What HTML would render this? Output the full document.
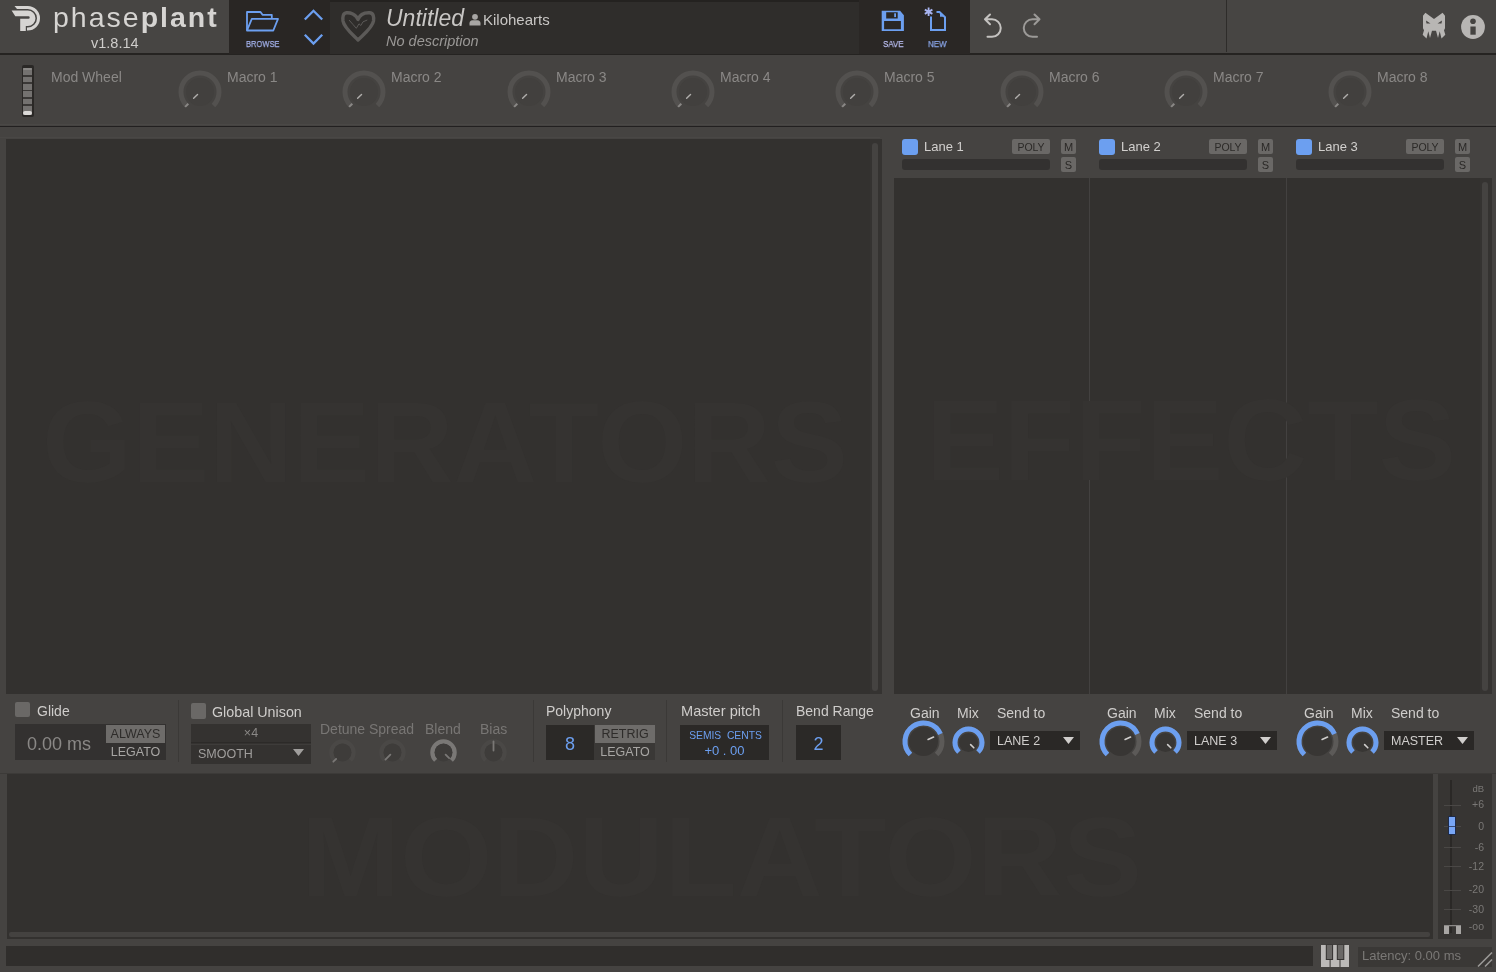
<!DOCTYPE html><html><head><meta charset="utf-8"><style>
html,body{margin:0;padding:0;background:#454341;width:1496px;height:972px;overflow:hidden;position:relative;font-family:"Liberation Sans", sans-serif;}
body>div,body>svg{position:absolute;}
.t{white-space:nowrap;line-height:1.15;will-change:transform;}
</style></head><body>
<div style="left:0px;top:0px;width:1496px;height:54px;background:#474543;"></div><div style="left:0px;top:53.2px;width:1496px;height:1.6px;background:#252321;"></div><div class="t" style="left:53px;top:0.5px;font-size:28.5px;color:#d6d4d2;letter-spacing:2px;">phase<b>plant</b></div><div class="t" style="left:91px;top:35px;font-size:14.5px;color:#cfcdcb;">v1.8.14</div><div style="left:229px;top:0px;width:101px;height:53.5px;background:#292624;"></div><div style="left:330px;top:0px;width:529px;height:53.5px;background:#2f2d2b;"></div><div style="left:330px;top:0px;width:529px;height:2px;background:#242220;"></div><div style="left:859px;top:0px;width:111px;height:53.5px;background:#2a2725;"></div><div class="t" style="left:246px;top:38px;font-size:9.8px;color:#a4b2ec;-webkit-text-stroke:0.25px #a4b2ec;transform:scaleX(0.77);transform-origin:0 0;">BROWSE</div><div class="t" style="left:882.5px;top:38px;font-size:9.8px;color:#b8bcee;-webkit-text-stroke:0.25px #b8bcee;transform:scaleX(0.81);transform-origin:0 0;">SAVE</div><div class="t" style="left:928px;top:38px;font-size:9.8px;color:#8aa6e8;-webkit-text-stroke:0.25px #8aa6e8;transform:scaleX(0.82);transform-origin:0 0;">NEW</div><div class="t" style="left:386px;top:5px;font-size:23px;color:#c8c6c4;font-style:italic;">Untitled</div><div class="t" style="left:483px;top:11.2px;font-size:15px;color:#c8c6c4;">Kilohearts</div><div class="t" style="left:386px;top:33px;font-size:14.5px;color:#9a9896;font-style:italic;">No description</div><div style="left:1226px;top:0px;width:1px;height:52px;background:#2e2c2a;"></div><div style="left:0px;top:54.8px;width:1496px;height:69px;background:#454341;"></div><div style="left:0px;top:123.8px;width:1496px;height:1px;background:#4a4846;"></div><div style="left:0px;top:125.9px;width:1496px;height:1.5px;background:#222020;"></div><div style="left:0px;top:136.5px;width:880px;height:1px;background:#494745;"></div><div style="left:22px;top:65px;width:11.5px;height:51.5px;background:#2a2826;border-radius:2px;"></div><div style="left:23.2px;top:68px;width:9.2px;height:47px;background:#747270;border-radius:1px;"></div><div style="left:23.2px;top:75px;width:9.2px;height:1.6px;background:#3a3836;"></div><div style="left:23.2px;top:82.3px;width:9.2px;height:1.6px;background:#3a3836;"></div><div style="left:23.2px;top:89.8px;width:9.2px;height:1.6px;background:#3a3836;"></div><div style="left:23.2px;top:97px;width:9.2px;height:1.6px;background:#3a3836;"></div><div style="left:23.2px;top:104.3px;width:9.2px;height:1.6px;background:#3a3836;"></div><div style="left:23.2px;top:68px;width:9.2px;height:2px;background:#8a8886;border-radius:1px;"></div><div style="left:23.2px;top:110.8px;width:9.2px;height:4.2px;background:#dcdad8;border-radius:2px;"></div><div class="t" style="left:51px;top:69px;font-size:14px;color:#8a8886;">Mod Wheel</div><svg style="position:absolute;left:174.0px;top:65.5px" width="52" height="52"><path d="M12.56 39.44A19 19 0 1 1 39.44 39.43" stroke="#53514f" stroke-width="5" fill="none"/><circle cx="26.0" cy="26.0" r="14" fill="#42403e"/><line x1="23.53" y1="28.47" x2="19.64" y2="32.36" stroke="#b0aeac" stroke-width="1.4" stroke-linecap="round"/></svg><svg style="position:absolute;left:175.0px;top:66.5px" width="50" height="50"><line x1="13.33" y1="36.67" x2="10.15" y2="39.85" stroke="#8a8886" stroke-width="2"/></svg><div class="t" style="left:227.0px;top:69px;font-size:14px;color:#8a8886;">Macro 1</div><svg style="position:absolute;left:338.3px;top:65.5px" width="52" height="52"><path d="M12.56 39.44A19 19 0 1 1 39.44 39.43" stroke="#53514f" stroke-width="5" fill="none"/><circle cx="26.0" cy="26.0" r="14" fill="#42403e"/><line x1="23.53" y1="28.47" x2="19.64" y2="32.36" stroke="#b0aeac" stroke-width="1.4" stroke-linecap="round"/></svg><svg style="position:absolute;left:339.3px;top:66.5px" width="50" height="50"><line x1="13.33" y1="36.67" x2="10.15" y2="39.85" stroke="#8a8886" stroke-width="2"/></svg><div class="t" style="left:391.3px;top:69px;font-size:14px;color:#8a8886;">Macro 2</div><svg style="position:absolute;left:502.6px;top:65.5px" width="52" height="52"><path d="M12.56 39.44A19 19 0 1 1 39.44 39.43" stroke="#53514f" stroke-width="5" fill="none"/><circle cx="26.0" cy="26.0" r="14" fill="#42403e"/><line x1="23.53" y1="28.47" x2="19.64" y2="32.36" stroke="#b0aeac" stroke-width="1.4" stroke-linecap="round"/></svg><svg style="position:absolute;left:503.6px;top:66.5px" width="50" height="50"><line x1="13.33" y1="36.67" x2="10.15" y2="39.85" stroke="#8a8886" stroke-width="2"/></svg><div class="t" style="left:555.6px;top:69px;font-size:14px;color:#8a8886;">Macro 3</div><svg style="position:absolute;left:666.9000000000001px;top:65.5px" width="52" height="52"><path d="M12.56 39.44A19 19 0 1 1 39.44 39.43" stroke="#53514f" stroke-width="5" fill="none"/><circle cx="26.0" cy="26.0" r="14" fill="#42403e"/><line x1="23.53" y1="28.47" x2="19.64" y2="32.36" stroke="#b0aeac" stroke-width="1.4" stroke-linecap="round"/></svg><svg style="position:absolute;left:667.9000000000001px;top:66.5px" width="50" height="50"><line x1="13.33" y1="36.67" x2="10.15" y2="39.85" stroke="#8a8886" stroke-width="2"/></svg><div class="t" style="left:719.9000000000001px;top:69px;font-size:14px;color:#8a8886;">Macro 4</div><svg style="position:absolute;left:831.2px;top:65.5px" width="52" height="52"><path d="M12.56 39.44A19 19 0 1 1 39.44 39.43" stroke="#53514f" stroke-width="5" fill="none"/><circle cx="26.0" cy="26.0" r="14" fill="#42403e"/><line x1="23.53" y1="28.47" x2="19.64" y2="32.36" stroke="#b0aeac" stroke-width="1.4" stroke-linecap="round"/></svg><svg style="position:absolute;left:832.2px;top:66.5px" width="50" height="50"><line x1="13.33" y1="36.67" x2="10.15" y2="39.85" stroke="#8a8886" stroke-width="2"/></svg><div class="t" style="left:884.2px;top:69px;font-size:14px;color:#8a8886;">Macro 5</div><svg style="position:absolute;left:995.5px;top:65.5px" width="52" height="52"><path d="M12.56 39.44A19 19 0 1 1 39.44 39.43" stroke="#53514f" stroke-width="5" fill="none"/><circle cx="26.0" cy="26.0" r="14" fill="#42403e"/><line x1="23.53" y1="28.47" x2="19.64" y2="32.36" stroke="#b0aeac" stroke-width="1.4" stroke-linecap="round"/></svg><svg style="position:absolute;left:996.5px;top:66.5px" width="50" height="50"><line x1="13.33" y1="36.67" x2="10.15" y2="39.85" stroke="#8a8886" stroke-width="2"/></svg><div class="t" style="left:1048.5px;top:69px;font-size:14px;color:#8a8886;">Macro 6</div><svg style="position:absolute;left:1159.8000000000002px;top:65.5px" width="52" height="52"><path d="M12.56 39.44A19 19 0 1 1 39.44 39.43" stroke="#53514f" stroke-width="5" fill="none"/><circle cx="26.0" cy="26.0" r="14" fill="#42403e"/><line x1="23.53" y1="28.47" x2="19.64" y2="32.36" stroke="#b0aeac" stroke-width="1.4" stroke-linecap="round"/></svg><svg style="position:absolute;left:1160.8000000000002px;top:66.5px" width="50" height="50"><line x1="13.33" y1="36.67" x2="10.15" y2="39.85" stroke="#8a8886" stroke-width="2"/></svg><div class="t" style="left:1212.8000000000002px;top:69px;font-size:14px;color:#8a8886;">Macro 7</div><svg style="position:absolute;left:1324.1000000000001px;top:65.5px" width="52" height="52"><path d="M12.56 39.44A19 19 0 1 1 39.44 39.43" stroke="#53514f" stroke-width="5" fill="none"/><circle cx="26.0" cy="26.0" r="14" fill="#42403e"/><line x1="23.53" y1="28.47" x2="19.64" y2="32.36" stroke="#b0aeac" stroke-width="1.4" stroke-linecap="round"/></svg><svg style="position:absolute;left:1325.1000000000001px;top:66.5px" width="50" height="50"><line x1="13.33" y1="36.67" x2="10.15" y2="39.85" stroke="#8a8886" stroke-width="2"/></svg><div class="t" style="left:1377.1000000000001px;top:69px;font-size:14px;color:#8a8886;">Macro 8</div><div style="left:6px;top:139px;width:876px;height:555px;background:#33312f;"></div><div style="left:870px;top:139px;width:12px;height:555px;background:#353331;"></div><div style="left:872.3px;top:142.5px;width:5.8px;height:548px;background:#454341;border-radius:3px;"></div><svg style="position:absolute;left:0;top:0" width="1496" height="972"><text x="42" y="482" textLength="806" lengthAdjust="spacingAndGlyphs" font-family="Liberation Sans" font-weight="bold" font-size="115" fill="#353331">GENERATORS</text></svg><div style="left:902px;top:139px;width:16px;height:16px;background:#6c9ff0;border-radius:3px;"></div><div class="t" style="left:924px;top:140px;font-size:13px;color:#d2d0ce;">Lane 1</div><div style="left:1012px;top:139px;width:38px;height:15px;background:#6a6866;border-radius:2px;"></div><div class="t" style="left:1012px;top:140.5px;font-size:10.5px;color:#2c2a28;width:38px;text-align:center;">POLY</div><div style="left:902px;top:159px;width:148px;height:11px;background:#333130;border-radius:3px;"></div><div style="left:1061px;top:139px;width:15px;height:15px;background:#6a6866;border-radius:2px;"></div><div class="t" style="left:1061px;top:140.5px;font-size:11px;color:#2a2826;width:15px;text-align:center;">M</div><div style="left:1061px;top:157px;width:15px;height:15px;background:#6a6866;border-radius:2px;"></div><div class="t" style="left:1061px;top:158.5px;font-size:11px;color:#2a2826;width:15px;text-align:center;">S</div><div style="left:1099px;top:139px;width:16px;height:16px;background:#6c9ff0;border-radius:3px;"></div><div class="t" style="left:1121px;top:140px;font-size:13px;color:#d2d0ce;">Lane 2</div><div style="left:1209px;top:139px;width:38px;height:15px;background:#6a6866;border-radius:2px;"></div><div class="t" style="left:1209px;top:140.5px;font-size:10.5px;color:#2c2a28;width:38px;text-align:center;">POLY</div><div style="left:1099px;top:159px;width:148px;height:11px;background:#333130;border-radius:3px;"></div><div style="left:1258px;top:139px;width:15px;height:15px;background:#6a6866;border-radius:2px;"></div><div class="t" style="left:1258px;top:140.5px;font-size:11px;color:#2a2826;width:15px;text-align:center;">M</div><div style="left:1258px;top:157px;width:15px;height:15px;background:#6a6866;border-radius:2px;"></div><div class="t" style="left:1258px;top:158.5px;font-size:11px;color:#2a2826;width:15px;text-align:center;">S</div><div style="left:1296px;top:139px;width:16px;height:16px;background:#6c9ff0;border-radius:3px;"></div><div class="t" style="left:1318px;top:140px;font-size:13px;color:#d2d0ce;">Lane 3</div><div style="left:1406px;top:139px;width:38px;height:15px;background:#6a6866;border-radius:2px;"></div><div class="t" style="left:1406px;top:140.5px;font-size:10.5px;color:#2c2a28;width:38px;text-align:center;">POLY</div><div style="left:1296px;top:159px;width:148px;height:11px;background:#333130;border-radius:3px;"></div><div style="left:1455px;top:139px;width:15px;height:15px;background:#6a6866;border-radius:2px;"></div><div class="t" style="left:1455px;top:140.5px;font-size:11px;color:#2a2826;width:15px;text-align:center;">M</div><div style="left:1455px;top:157px;width:15px;height:15px;background:#6a6866;border-radius:2px;"></div><div class="t" style="left:1455px;top:158.5px;font-size:11px;color:#2a2826;width:15px;text-align:center;">S</div><div style="left:894px;top:178px;width:598px;height:516px;background:#33312f;"></div><div style="left:1088.5px;top:178px;width:1.5px;height:516px;background:#434140;"></div><div style="left:1285.5px;top:178px;width:1.5px;height:516px;background:#434140;"></div><div style="left:1480px;top:178px;width:12px;height:516px;background:#353331;"></div><div style="left:1482px;top:181.5px;width:6px;height:509px;background:#454341;border-radius:3px;"></div><svg style="position:absolute;left:0;top:0" width="1496" height="972"><text x="926" y="480" textLength="530" lengthAdjust="spacingAndGlyphs" font-family="Liberation Sans" font-weight="bold" font-size="115" fill="#353331">EFFECTS</text></svg><div style="left:15px;top:702px;width:15px;height:15px;background:#6a6866;border-radius:2px;"></div><div class="t" style="left:37px;top:703px;font-size:14px;color:#cfcdcb;">Glide</div><div style="left:15px;top:724px;width:151px;height:36px;background:#333130;"></div><div class="t" style="left:27px;top:734px;font-size:18px;color:#8a8886;">0.00 ms</div><div style="left:106px;top:725px;width:59px;height:18px;background:#6e6c6a;"></div><div class="t" style="left:106px;top:727px;font-size:12.5px;color:#2e2c2a;width:59px;text-align:center;">ALWAYS</div><div class="t" style="left:106px;top:745px;font-size:12.5px;color:#a8a6a4;width:59px;text-align:center;">LEGATO</div><div style="left:178px;top:700px;width:1px;height:62px;background:#3b3937;"></div><div style="left:191px;top:703px;width:15px;height:16px;background:#6a6866;border-radius:2px;"></div><div class="t" style="left:212px;top:703.5px;font-size:14.3px;color:#cfcdcb;">Global Unison</div><div style="left:191px;top:724px;width:120px;height:40px;background:#343230;"></div><div style="left:191px;top:742px;width:120px;height:1px;background:#2c2a28;"></div><div style="left:191px;top:743.5px;width:120px;height:1px;background:#3e3c3a;"></div><div class="t" style="left:191px;top:726px;font-size:12.5px;color:#8a8886;width:120px;text-align:center;">×4</div><div class="t" style="left:198px;top:746.5px;font-size:12.5px;color:#a09e9c;">SMOOTH</div><svg style="position:absolute;left:293px;top:749px" width="11" height="8"><path d="M0 0H11L5.5 7Z" fill="#a09e9c"/></svg><div class="t" style="left:320px;top:721px;font-size:14px;color:#787674;">Detune</div><div class="t" style="left:369px;top:721px;font-size:14px;color:#787674;">Spread</div><div class="t" style="left:425px;top:721px;font-size:14px;color:#787674;">Blend</div><div class="t" style="left:480px;top:721px;font-size:14px;color:#787674;">Bias</div><svg style="position:absolute;left:324.5px;top:734.5px" width="35.0" height="35.0"><path d="M9.72 25.28A11 11 0 1 1 25.28 25.28" stroke="#4a4846" stroke-width="4.5" fill="none"/><circle cx="17.5" cy="17.5" r="9" fill="#3e3c3a"/><line x1="11.14" y1="23.86" x2="8.31" y2="26.69" stroke="#7a7876" stroke-width="1.8" stroke-linecap="round"/></svg><svg style="position:absolute;left:374.5px;top:734.5px" width="35.0" height="35.0"><path d="M9.72 25.28A11 11 0 1 1 25.28 25.28" stroke="#4a4846" stroke-width="4.5" fill="none"/><circle cx="17.5" cy="17.5" r="9" fill="#3e3c3a"/><line x1="15.38" y1="19.62" x2="10.43" y2="24.57" stroke="#7a7876" stroke-width="1.8" stroke-linecap="round"/></svg><svg style="position:absolute;left:425.5px;top:734.5px" width="35.0" height="35.0"><path d="M9.72 25.28A11 11 0 1 1 25.28 25.28" stroke="#7a7876" stroke-width="4.5" fill="none"/><circle cx="17.5" cy="17.5" r="9" fill="#3e3c3a"/><line x1="19.62" y1="19.62" x2="23.16" y2="23.16" stroke="#7a7876" stroke-width="1.8" stroke-linecap="round"/></svg><svg style="position:absolute;left:475.5px;top:734.5px" width="35.0" height="35.0"><path d="M9.72 25.28A11 11 0 1 1 25.28 25.28" stroke="#4a4846" stroke-width="4.5" fill="none"/><circle cx="17.5" cy="17.5" r="9" fill="#3e3c3a"/><line x1="17.50" y1="15.50" x2="17.50" y2="6.50" stroke="#7a7876" stroke-width="1.8" stroke-linecap="round"/></svg><div style="left:533px;top:700px;width:1px;height:62px;background:#3b3937;"></div><div class="t" style="left:546px;top:703px;font-size:14px;color:#cfcdcb;">Polyphony</div><div style="left:546px;top:725px;width:109px;height:35px;background:#2b2927;"></div><div style="left:594px;top:725px;width:61px;height:35px;background:#3a3836;"></div><div class="t" style="left:546px;top:734px;font-size:18px;color:#6c9ff0;width:48px;text-align:center;">8</div><div style="left:595px;top:725px;width:60px;height:18px;background:#6e6c6a;"></div><div class="t" style="left:595px;top:727px;font-size:12.5px;color:#2e2c2a;width:60px;text-align:center;">RETRIG</div><div class="t" style="left:595px;top:745px;font-size:12.5px;color:#a8a6a4;width:60px;text-align:center;">LEGATO</div><div style="left:666px;top:700px;width:1px;height:62px;background:#3b3937;"></div><div class="t" style="left:681px;top:703px;font-size:14.6px;color:#cfcdcb;">Master pitch</div><div style="left:680px;top:725px;width:89px;height:35px;background:#2b2927;"></div><div class="t" style="left:681px;top:730px;font-size:10.3px;color:#6c9ff0;width:89px;text-align:center;">SEMIS&nbsp;&nbsp;CENTS</div><div class="t" style="left:680px;top:744px;font-size:13px;color:#6c9ff0;width:89px;text-align:center;">+0 . 00</div><div style="left:782px;top:700px;width:1px;height:62px;background:#3b3937;"></div><div class="t" style="left:796px;top:703px;font-size:14px;color:#cfcdcb;">Bend Range</div><div style="left:796px;top:725px;width:45px;height:35px;background:#2b2927;"></div><div class="t" style="left:796px;top:734px;font-size:18px;color:#6c9ff0;width:45px;text-align:center;">2</div><div class="t" style="left:910px;top:704.5px;font-size:14px;color:#cfcdcb;">Gain</div><div class="t" style="left:957px;top:704.5px;font-size:14px;color:#cfcdcb;">Mix</div><div class="t" style="left:997px;top:704.5px;font-size:14px;color:#cfcdcb;">Send to</div><svg style="position:absolute;left:897.5px;top:715.5px" width="51.0" height="51.0"><path d="M12.42 38.58A18.5 18.5 0 1 1 38.58 38.58" stroke="#5c5a58" stroke-width="5" fill="none"/><path d="M12.42 38.58A18.5 18.5 0 1 1 42.40 17.98" stroke="#6c9ff0" stroke-width="5" fill="none"/><circle cx="25.5" cy="25.5" r="14.5" fill="#383634"/><line x1="30.07" y1="23.47" x2="35.55" y2="21.03" stroke="#d0cecc" stroke-width="1.6" stroke-linecap="round"/></svg><svg style="position:absolute;left:947.5px;top:721.5px" width="41.0" height="41.0"><path d="M10.95 30.05A13.5 13.5 0 1 1 30.05 30.04" stroke="#5c5a58" stroke-width="5" fill="none"/><path d="M10.95 30.05A13.5 13.5 0 1 1 30.06 30.03" stroke="#6c9ff0" stroke-width="5" fill="none"/><circle cx="20.5" cy="20.5" r="9.5" fill="#383634"/><line x1="22.63" y1="22.62" x2="25.81" y2="25.79" stroke="#d0cecc" stroke-width="1.6" stroke-linecap="round"/></svg><div style="left:990px;top:731px;width:90px;height:19px;background:#2a2826;"></div><div class="t" style="left:997px;top:734px;font-size:12.5px;color:#d0cecc;">LANE 2</div><svg style="position:absolute;left:1063px;top:737px" width="11" height="8"><path d="M0 0H11L5.5 7Z" fill="#d0cecc"/></svg><div class="t" style="left:1107px;top:704.5px;font-size:14px;color:#cfcdcb;">Gain</div><div class="t" style="left:1154px;top:704.5px;font-size:14px;color:#cfcdcb;">Mix</div><div class="t" style="left:1194px;top:704.5px;font-size:14px;color:#cfcdcb;">Send to</div><svg style="position:absolute;left:1094.5px;top:715.5px" width="51.0" height="51.0"><path d="M12.42 38.58A18.5 18.5 0 1 1 38.58 38.58" stroke="#5c5a58" stroke-width="5" fill="none"/><path d="M12.42 38.58A18.5 18.5 0 1 1 42.40 17.98" stroke="#6c9ff0" stroke-width="5" fill="none"/><circle cx="25.5" cy="25.5" r="14.5" fill="#383634"/><line x1="30.07" y1="23.47" x2="35.55" y2="21.03" stroke="#d0cecc" stroke-width="1.6" stroke-linecap="round"/></svg><svg style="position:absolute;left:1144.5px;top:721.5px" width="41.0" height="41.0"><path d="M10.95 30.05A13.5 13.5 0 1 1 30.05 30.04" stroke="#5c5a58" stroke-width="5" fill="none"/><path d="M10.95 30.05A13.5 13.5 0 1 1 30.06 30.03" stroke="#6c9ff0" stroke-width="5" fill="none"/><circle cx="20.5" cy="20.5" r="9.5" fill="#383634"/><line x1="22.63" y1="22.62" x2="25.81" y2="25.79" stroke="#d0cecc" stroke-width="1.6" stroke-linecap="round"/></svg><div style="left:1187px;top:731px;width:90px;height:19px;background:#2a2826;"></div><div class="t" style="left:1194px;top:734px;font-size:12.5px;color:#d0cecc;">LANE 3</div><svg style="position:absolute;left:1260px;top:737px" width="11" height="8"><path d="M0 0H11L5.5 7Z" fill="#d0cecc"/></svg><div class="t" style="left:1304px;top:704.5px;font-size:14px;color:#cfcdcb;">Gain</div><div class="t" style="left:1351px;top:704.5px;font-size:14px;color:#cfcdcb;">Mix</div><div class="t" style="left:1391px;top:704.5px;font-size:14px;color:#cfcdcb;">Send to</div><svg style="position:absolute;left:1291.5px;top:715.5px" width="51.0" height="51.0"><path d="M12.42 38.58A18.5 18.5 0 1 1 38.58 38.58" stroke="#5c5a58" stroke-width="5" fill="none"/><path d="M12.42 38.58A18.5 18.5 0 1 1 42.40 17.98" stroke="#6c9ff0" stroke-width="5" fill="none"/><circle cx="25.5" cy="25.5" r="14.5" fill="#383634"/><line x1="30.07" y1="23.47" x2="35.55" y2="21.03" stroke="#d0cecc" stroke-width="1.6" stroke-linecap="round"/></svg><svg style="position:absolute;left:1341.5px;top:721.5px" width="41.0" height="41.0"><path d="M10.95 30.05A13.5 13.5 0 1 1 30.05 30.04" stroke="#5c5a58" stroke-width="5" fill="none"/><path d="M10.95 30.05A13.5 13.5 0 1 1 30.06 30.03" stroke="#6c9ff0" stroke-width="5" fill="none"/><circle cx="20.5" cy="20.5" r="9.5" fill="#383634"/><line x1="22.63" y1="22.62" x2="25.81" y2="25.79" stroke="#d0cecc" stroke-width="1.6" stroke-linecap="round"/></svg><div style="left:1384px;top:731px;width:90px;height:19px;background:#2a2826;"></div><div class="t" style="left:1391px;top:734px;font-size:12.5px;color:#d0cecc;">MASTER</div><svg style="position:absolute;left:1457px;top:737px" width="11" height="8"><path d="M0 0H11L5.5 7Z" fill="#d0cecc"/></svg><div style="left:0px;top:773px;width:1496px;height:1px;background:#3c3a38;"></div><div style="left:7px;top:774px;width:1426px;height:165px;background:#33312f;"></div><div style="left:9px;top:932px;width:1421px;height:5px;background:#444240;border-radius:2px;"></div><svg style="position:absolute;left:0;top:0" width="1496" height="972"><text x="301" y="896" textLength="841" lengthAdjust="spacingAndGlyphs" font-family="Liberation Sans" font-weight="bold" font-size="114" fill="#353331">MODULATORS</text></svg><div style="left:1438px;top:774px;width:54px;height:165px;background:#373533;"></div><div style="left:1450px;top:780px;width:2px;height:153px;background:#2a2826;"></div><div style="left:1444px;top:804.5px;width:17px;height:1px;background:#4a4846;"></div><div class="t" style="left:1459px;top:798.0px;font-size:10.5px;color:#7a7876;width:25px;text-align:right;">+6</div><div style="left:1444px;top:826px;width:17px;height:1px;background:#4a4846;"></div><div class="t" style="left:1459px;top:819.5px;font-size:10.5px;color:#7a7876;width:25px;text-align:right;">0</div><div style="left:1444px;top:847px;width:17px;height:1px;background:#4a4846;"></div><div class="t" style="left:1459px;top:840.5px;font-size:10.5px;color:#7a7876;width:25px;text-align:right;">-6</div><div style="left:1444px;top:866px;width:17px;height:1px;background:#4a4846;"></div><div class="t" style="left:1459px;top:859.5px;font-size:10.5px;color:#7a7876;width:25px;text-align:right;">-12</div><div style="left:1444px;top:889.5px;width:17px;height:1px;background:#4a4846;"></div><div class="t" style="left:1459px;top:883.0px;font-size:10.5px;color:#7a7876;width:25px;text-align:right;">-20</div><div style="left:1444px;top:909px;width:17px;height:1px;background:#4a4846;"></div><div class="t" style="left:1459px;top:902.5px;font-size:10.5px;color:#7a7876;width:25px;text-align:right;">-30</div><div style="left:1444px;top:926px;width:17px;height:1px;background:#4a4846;"></div><div class="t" style="left:1459px;top:919.5px;font-size:10.5px;color:#7a7876;width:25px;text-align:right;">-oo</div><div class="t" style="left:1460px;top:783.5px;font-size:9.5px;color:#7a7876;width:24px;text-align:right;">dB</div><div style="left:1447.5px;top:816px;width:8px;height:19px;background:#1e2a48;border-radius:1px;"></div><div style="left:1448.5px;top:817px;width:6px;height:17px;background:#78a6f6;"></div><div style="left:1448.5px;top:825.5px;width:6px;height:1px;background:#3a4a70;"></div><div style="left:1444px;top:925px;width:5px;height:9px;background:#a8a6a4;"></div><div style="left:1456px;top:925px;width:5px;height:9px;background:#a8a6a4;"></div><div style="left:1444px;top:925px;width:17px;height:1px;background:#8a8886;"></div><div style="left:6px;top:946px;width:1307px;height:20px;background:#302e2c;"></div><div style="left:1358px;top:947px;width:134px;height:20px;background:#3a3836;"></div><div class="t" style="left:1362px;top:949px;font-size:13px;color:#7a7876;">Latency: 0.00 ms</div><svg style="position:absolute;left:0;top:0" width="1496" height="972"><path d="M14.5 6H27.75A12.25 12.25 0 0 1 27.75 30.5H27V27.5H27.75A9.25 9.25 0 0 0 27.75 9H17Z" fill="#d6d4d2"/><path d="M11.6 10.5H27.75A7.75 7.75 0 0 1 27.75 26H25.8V31H20.2V18.7H28.5A1.2 1.2 0 0 0 28.5 16.3H15.3Z" fill="#d6d4d2"/><path d="M247 30.5V12H260.5L262.5 14.8H271.8V18.2" stroke="#6c9ff0" stroke-width="1.8" fill="none" stroke-linejoin="round"/><path d="M247 30.5L251.8 18.8H278L273.3 30.5Z" stroke="#6c9ff0" stroke-width="1.8" fill="none" stroke-linejoin="round"/><path d="M304.8 19.5L313.5 10.8L322.2 19.5M304.8 34.8L313.5 43.5L322.2 34.8" stroke="#6c9ff0" stroke-width="2.3" fill="none"/><path d="M358 19.5C356 14 350 12.5 346.5 12.8C343 13.2 342.5 17 343 21C344 27.5 352 34 358 40C364 34 372.5 27.5 373.5 21C374 16.5 373.5 13 369.5 12.8C365 12.6 360 14 358 19.5Z" stroke="#5c5a58" stroke-width="3.4" fill="none" stroke-linejoin="round"/><path d="M349 20L353 24.5L356.3 28.3L359 23.8L360.8 25.5L363 21.8L367.3 20" stroke="#5c5a58" stroke-width="1" fill="none"/><circle cx="475" cy="16.8" r="2.9" fill="#a8a6a4"/><path d="M469.5 25.5V23.2Q469.5 20.8 472.5 20.3H477.5Q480.5 20.8 480.5 23.2V25.5Z" fill="#a8a6a4"/><path fill-rule="evenodd" d="M881.7 10.7H900.1L903.9 15.2V31H881.7ZM886.2 12.2V18.4H897.7V12.2ZM884.1 21.1V29.2H900.9V21.1Z" fill="#6c9ff0"/><rect x="894.2" y="13.3" width="1.8" height="3.8" fill="#6c9ff0"/><path d="M936.5 12H939.5L945 17.2V30H931V16.5" stroke="#6c9ff0" stroke-width="2" fill="none"/><path d="M940 12.5V16.8H944.5Z" fill="#6c9ff0"/><path d="M928.6 7.5V16M924.8 9.6L932.4 13.9M924.8 13.9L932.4 9.6" stroke="#a8b4f0" stroke-width="1.8"/><path d="M990 14.5L985 19.3L990 24.3M985.5 19.3H992A8.75 8.75 0 0 1 992 36.8H987.5" stroke="#c4c2c0" stroke-width="2" fill="none" stroke-linecap="round" stroke-linejoin="round"/><path d="M1034.5 14.5L1039.5 19.3L1034.5 24.3M1039 19.3H1032.5A8.75 8.75 0 0 0 1032.5 36.8H1037" stroke="#9c9a98" stroke-width="2" fill="none" stroke-linecap="round" stroke-linejoin="round"/><path transform="translate(1423 12.8)" d="M0 3L2.4 0L11 6.3L19.6 0L22 3V15.5L21 17.5L22.3 22L18.5 25.7L16.7 18.5L15 25.2L13 18H9L7 25.2L5.3 18.5L3.5 25.7L-0.3 22L1 17.5L0 15.5Z" fill="#b8b6b4"/><path transform="translate(1423 12.8)" d="M3 7.8L7.5 10.8H3.5ZM19 7.8L14.5 10.8H18.5Z" fill="#454341"/><circle cx="1473" cy="27" r="11.9" fill="#b8b6b4"/><circle cx="1473" cy="21.2" r="2.8" fill="#454341"/><rect x="1470.4" y="26.5" width="5.3" height="8.2" fill="#454341"/><rect x="1321" y="945" width="28" height="22" fill="#bcbab8"/><rect x="1325.8" y="944.5" width="7.3" height="15.5" fill="#353331"/><rect x="1336.8" y="944.5" width="7.5" height="15.5" fill="#353331"/><rect x="1326.8" y="945" width="5.3" height="14" fill="#6a6866"/><rect x="1337.8" y="945" width="5.5" height="14" fill="#6a6866"/><rect x="1329.6" y="959" width="1" height="8" fill="#353331"/><rect x="1339.5" y="959" width="1" height="8" fill="#353331"/><path d="M1478 966.5L1492 952.5M1485 966.5L1492 959.5" stroke="#9a9896" stroke-width="1.6"/></svg>
</body></html>
